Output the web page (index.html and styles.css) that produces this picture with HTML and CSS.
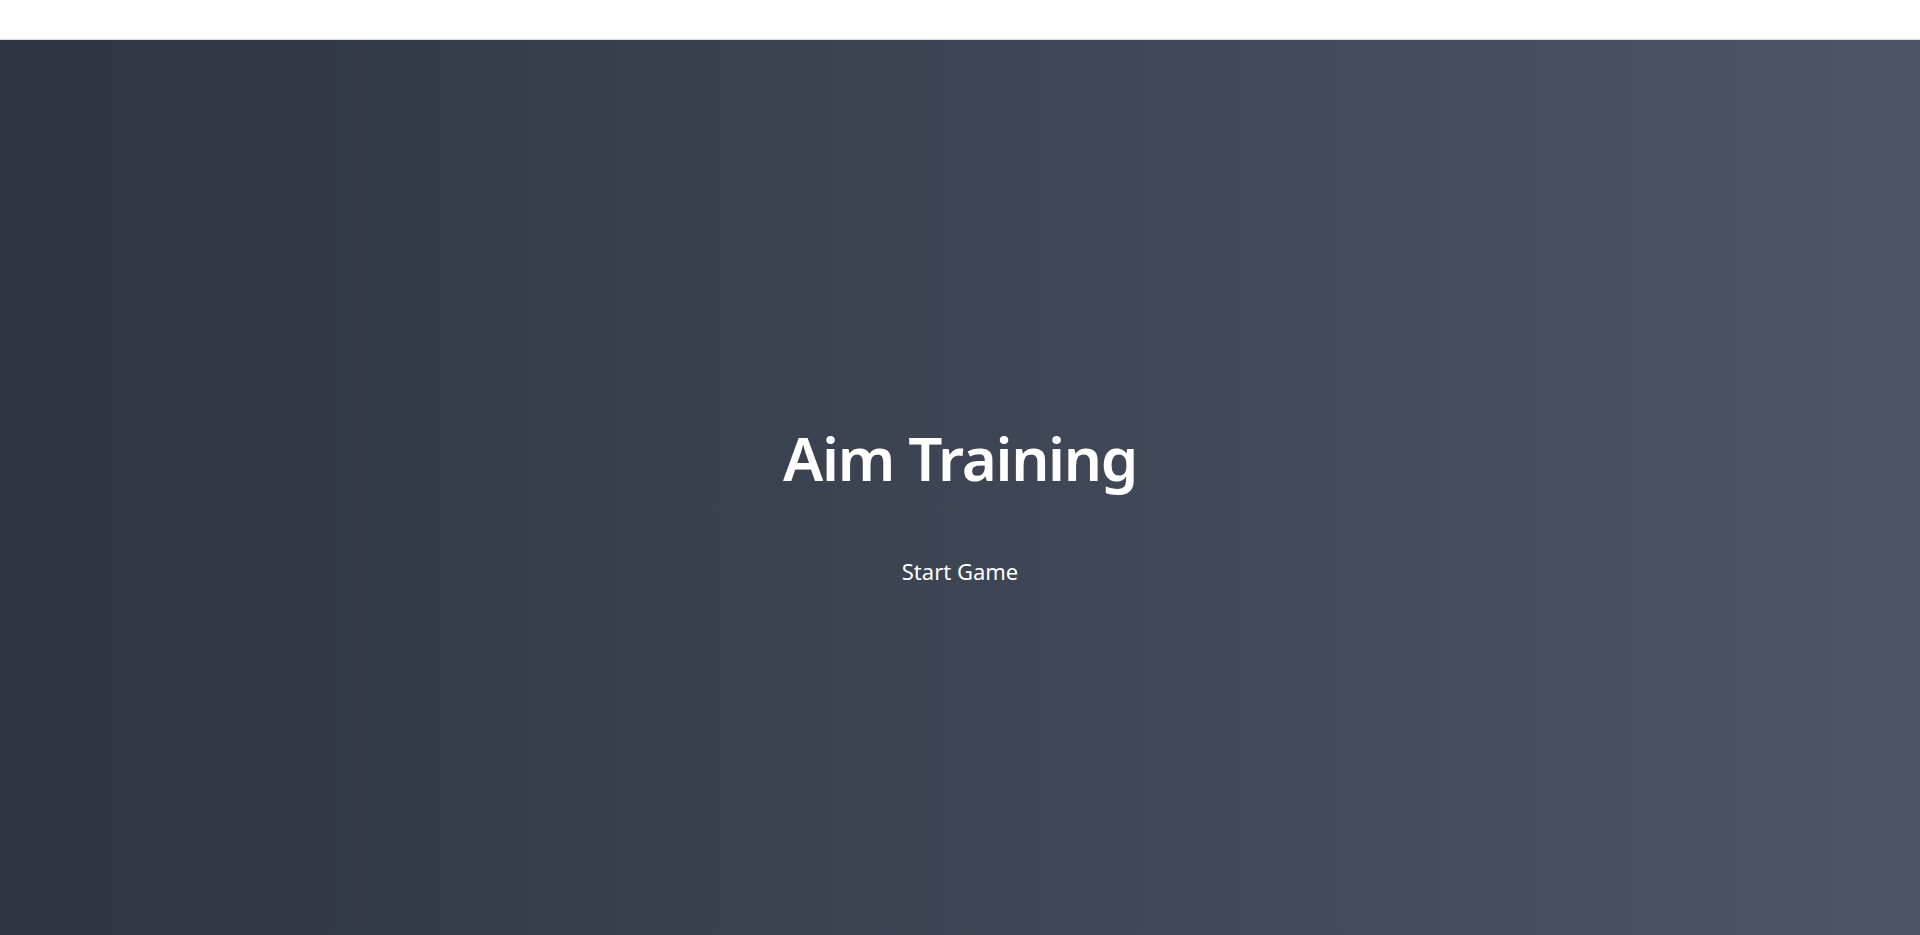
FILE: index.html
```html
<!DOCTYPE html>
<html lang="en">
<head>
<meta charset="utf-8">
<title>Aim Training</title>
<link rel="stylesheet" href="styles.css">
</head>
<body>
<header class="topbar"></header>
<main class="stage">
  <div class="menu">
    <h1 class="title">Aim Training</h1>
    <button class="start-btn" type="button">Start Game</button>
  </div>
</main>
</body>
</html>
```
FILE: styles.css
```css
html, body {
  margin: 0;
  padding: 0;
  height: 100%;
}
body {
  font-family: "Noto Sans", "Open Sans", sans-serif;
  background: #ffffff;
  display: flex;
  flex-direction: column;
  overflow: hidden;
}
.topbar {
  height: 40px;
  flex: 0 0 40px;
  background: #ffffff;
  border-bottom: 1px solid #d8dde3;
  box-sizing: border-box;
}
.stage {
  flex: 1;
  background: linear-gradient(to right, #2e3440, #4c5667);
  display: flex;
  align-items: center;
  justify-content: center;
}
.menu {
  display: flex;
  flex-direction: column;
  align-items: center;
  gap: 54px;
  margin-top: 40px;
}
.title {
  margin: 0;
  font-size: 60px;
  font-weight: 600;
  color: #ffffff;
  line-height: 72px;
  letter-spacing: -1.3px;
}
.start-btn {
  font-family: inherit;
  font-size: 22px;
  line-height: 30px;
  color: #ffffff;
  background: transparent;
  border: none;
  padding: 8px 16px;
  cursor: pointer;
}
```
